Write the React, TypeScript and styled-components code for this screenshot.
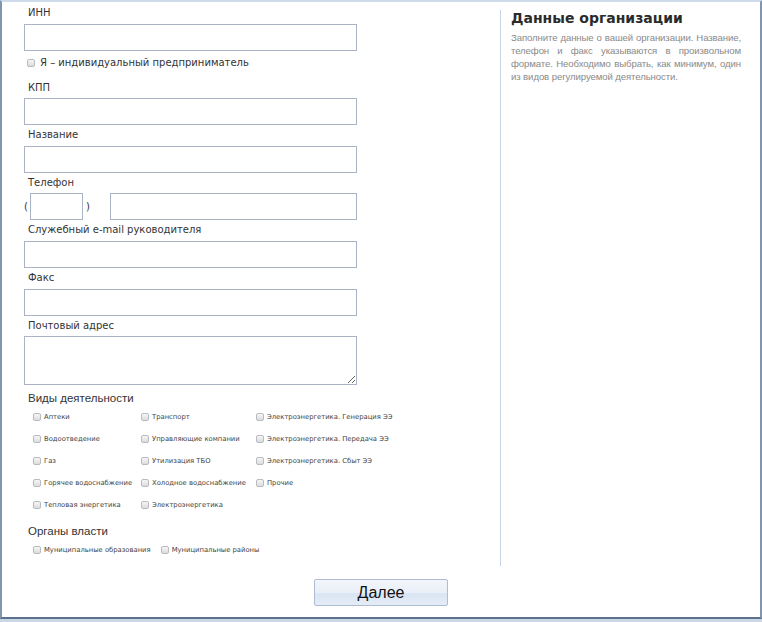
import React from 'react';
import styled, { createGlobalStyle } from 'styled-components';

const GlobalStyle = createGlobalStyle`
  html, body {
    margin: 0;
    padding: 0;
    background: #ffffff;
  }
`;

const Page = styled.div`
  width: 762px;
  height: 622px;
  display: flex;
  flex-direction: column;
  background: #c9d7e7;
  font-family: "DejaVu Sans", Verdana, sans-serif;
`;

const Window = styled.div`
  box-sizing: border-box;
  height: 619px;
  background: #ffffff;
  border-top: 2px solid #cddbeb;
  border-left: 2px solid #7f95b0;
  border-right: 2px solid #7f95b0;
  border-bottom: 2px solid #5c718c;
  display: flex;
  flex-direction: column;
`;

const Main = styled.div`
  display: flex;
`;

const Form = styled.div`
  box-sizing: border-box;
  width: 498px;
  padding: 1px 0 5px 22px;
  display: flex;
  flex-direction: column;
`;

const Label = styled.div`
  margin: 3px 0 4px 4px;
  font-size: 10px;
  line-height: 13.6px;
  color: #333333;
`;

const Input = styled.input<{ $width?: number }>`
  box-sizing: border-box;
  width: ${p => p.$width ?? 333}px;
  height: 27px;
  margin: 0;
  border: 1px solid #aab4c4;
  background: #ffffff;
  outline: none;
`;

const TextArea = styled.textarea`
  box-sizing: border-box;
  width: 333px;
  height: 49px;
  margin: 0;
  border: 1px solid #aab4c4;
  outline: none;
  resize: vertical;
`;

const PhoneRow = styled.div`
  display: flex;
  align-items: center;
`;

const Paren = styled.span<{ $left: number; $right: number }>`
  font-size: 10px;
  color: #333333;
  margin: 0 ${p => p.$right}px 0 ${p => p.$left}px;
`;

const Box = styled.span`
  box-sizing: border-box;
  flex: none;
  width: 8px;
  height: 8px;
  border: 1px solid #b8bcc2;
  border-radius: 2px;
  background: linear-gradient(#f6f6f6, #dcdcdc);
`;

const CheckRow = styled.label`
  display: flex;
  align-items: center;
  gap: 5px;
  margin: 5px 0 8px 3px;
  line-height: 14px;
  font-size: 10px;
  color: #333333;
`;

const Section = styled.div<{ $top: number }>`
  margin: ${p => p.$top}px 0 0 4px;
  font-family: "Liberation Sans", Arial, sans-serif;
  font-size: 11.5px;
  line-height: 15px;
  color: #333333;
`;

const Grid = styled.div`
  display: grid;
  grid-template-columns: 108px 115px auto;
  grid-auto-rows: 22px;
  margin-left: 9px;
`;

const InlineRow = styled.div`
  display: flex;
  height: 22px;
  gap: 10px;
  margin-left: 9px;
`;

const Item = styled.label`
  display: flex;
  align-items: center;
  gap: 3px;
  font-size: 6.8px;
  color: #444444;
  white-space: nowrap;
`;

const Aside = styled.div`
  flex: 1;
  margin-top: 8px;
  border-left: 1px solid #c6d4e4;
  padding: 0 19px 0 10px;
`;

const Heading = styled.div`
  font-weight: bold;
  font-size: 14px;
  line-height: 16px;
  color: #2b2b2b;
`;

const Note = styled.p`
  margin: 5px 0 0;
  font-family: "Liberation Sans", Arial, sans-serif;
  font-size: 9.6px;
  letter-spacing: -0.1px;
  line-height: 13px;
  color: #8a8a8a;
  text-align: justify;
`;

const Footer = styled.div`
  display: flex;
  justify-content: center;
  padding-top: 13px;
`;

const Button = styled.button`
  box-sizing: border-box;
  width: 134px;
  height: 27px;
  border: 1px solid #aebdd1;
  border-radius: 2px;
  background: linear-gradient(#f3f6fb 0%, #e9eff8 50%, #dae4f2 55%, #e4ecf7 100%);
  font-family: "Liberation Sans", Arial, sans-serif;
  font-size: 16px;
  color: #111111;
  padding: 0;
`;

const activities = [
  'Аптеки', 'Транспорт', 'Электроэнергетика. Генерация ЭЭ',
  'Водоотведение', 'Управляющие компании', 'Электроэнергетика. Передача ЭЭ',
  'Газ', 'Утилизация ТБО', 'Электроэнергетика. Сбыт ЭЭ',
  'Горячее водоснабжение', 'Холодное водоснабжение', 'Прочие',
  'Тепловая энергетика', 'Электроэнергетика',
];

const authorities = ['Муниципальные образования', 'Муниципальные районы'];

const App: React.FC = () => {
  return (
    <Page>
      <GlobalStyle />
      <Window>
        <Main>
          <Form>
            <Label>ИНН</Label>
            <Input />
            <CheckRow><Box />Я – индивидуальный предприниматель</CheckRow>

            <Label>КПП</Label>
            <Input />

            <Label>Название</Label>
            <Input />

            <Label>Телефон</Label>
            <PhoneRow>
              <Paren $left={0} $right={2}>(</Paren>
              <Input $width={53} />
              <Paren $left={3} $right={20}>)</Paren>
              <Input $width={247} />
            </PhoneRow>

            <Label>Служебный e-mail руководителя</Label>
            <Input />

            <Label>Факс</Label>
            <Input />

            <Label>Почтовый адрес</Label>
            <TextArea />

            <Section $top={6}>Виды деятельности</Section>
            <Grid>
              {activities.map(a => (
                <Item key={a}><Box />{a}</Item>
              ))}
            </Grid>

            <Section $top={8}>Органы власти</Section>
            <InlineRow>
              {authorities.map(a => (
                <Item key={a}><Box />{a}</Item>
              ))}
            </InlineRow>
          </Form>

          <Aside>
            <Heading>Данные организации</Heading>
            <Note>
              Заполните данные о вашей организации. Название, телефон и факс указываются
              в произвольном формате. Необходимо выбрать, как минимум, один из видов
              регулируемой деятельности.
            </Note>
          </Aside>
        </Main>

        <Footer>
          <Button>Далее</Button>
        </Footer>
      </Window>
    </Page>
  );
};

export default App;
